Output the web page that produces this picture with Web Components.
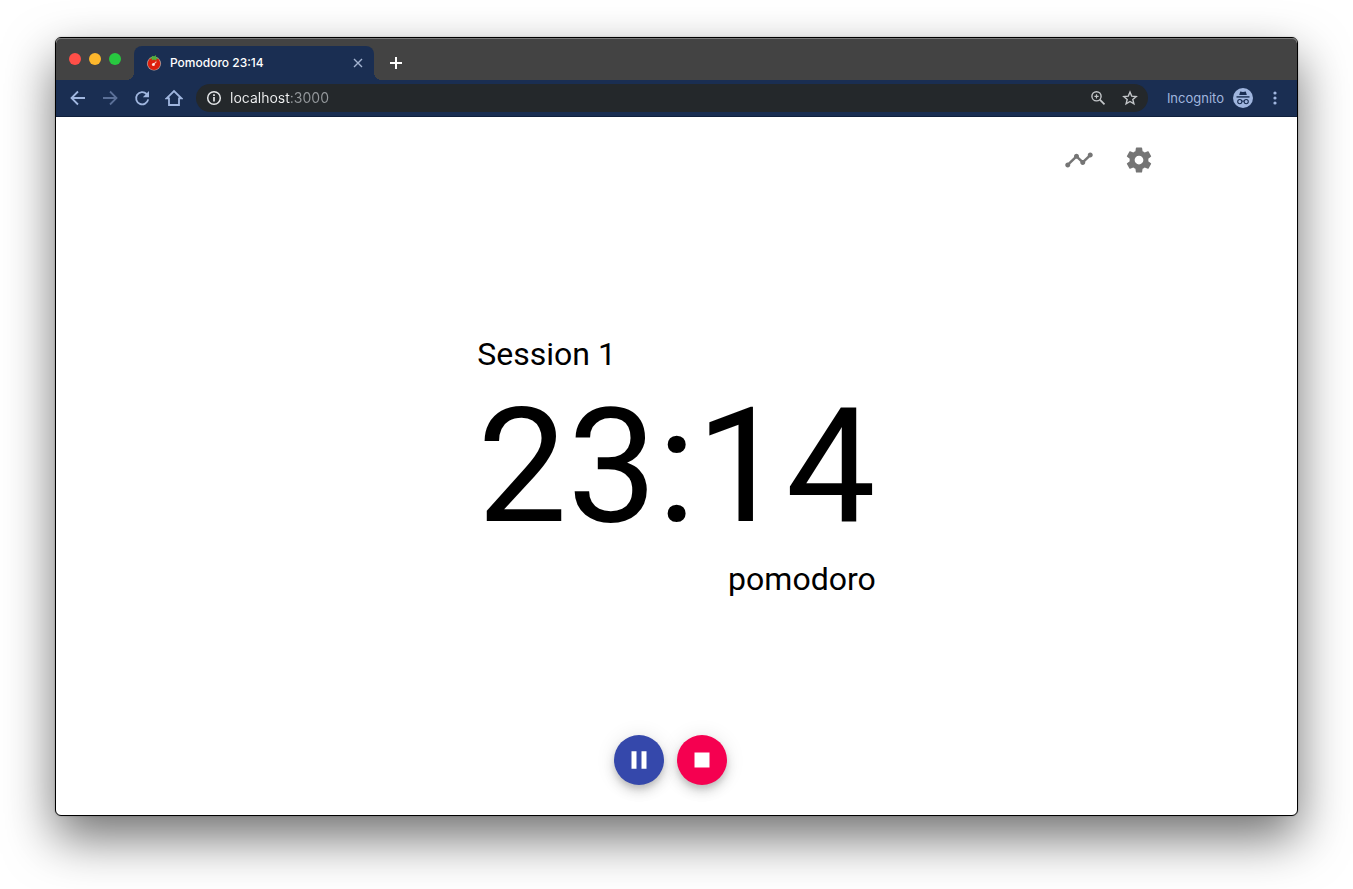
<!DOCTYPE html>
<html lang="en">
<head>
<meta charset="utf-8">
<title>Pomodoro 23:14</title>
<style>
  html { background: #fff; }
  body {
    margin: 0;
    box-sizing: border-box;
    min-height: 100vh;
    padding: 37px 55px 73px;
    display: flex;
    overflow: hidden;
  }
</style>
</head>
<body>
<browser-window>
  <tab-strip slot="tabs">Pomodoro 23:14</tab-strip>
  <nav-bar slot="toolbar" url="localhost:3000"></nav-bar>
  <pomodoro-app></pomodoro-app>
</browser-window>

<template id="browser-window">
  <style>
    :host {
      flex: 1; min-width: 0;
      display: flex; flex-direction: column;
      border: 1px solid #000;
      border-radius: 6px;
      background: #fff;
      overflow: hidden;
      box-shadow: 0 22px 50px rgba(0,0,0,.56), 0 0 2px rgba(0,0,0,.25);
      font-family: Inter, "Liberation Sans", sans-serif;
    }
    main { flex: 1; display: flex; }
  </style>
  <slot name="tabs"></slot>
  <slot name="toolbar"></slot>
  <main><slot></slot></main>
</template>

<template id="tab-strip">
  <style>
    :host {
      display: flex; align-items: flex-end;
      height: 42px; box-sizing: border-box;
      padding-left: 13px;
      border-radius: 5px 5px 0 0;
      background: #434343;
      box-shadow: inset 0 1px #7a7a7a;
      color: #fff;
    }
    button { border: 0; padding: 0; background: none; color: inherit; display: grid; place-items: center; }
    svg { display: block; }
    .lights { display: flex; gap: 8px; align-self: center; width: 65px; }
    .lights button { width: 12px; height: 12px; border-radius: 50%; }
    .close { background: #ff4f48; }
    .min { background: #fdb72c; }
    .max { background: #28c840; }
    .tab {
      position: relative;
      display: flex; align-items: center; gap: 8px;
      width: 240px; height: 34px; box-sizing: border-box;
      padding: 0 8px 0 12px;
      border-radius: 8px 8px 0 0;
      background: #1a2e52;
      font-size: 12px; font-weight: 500; line-height: 16px;
    }
    .tab::before, .tab::after {
      content: ""; position: absolute; bottom: 0; width: 8px; height: 8px;
    }
    .tab::before { right: 100%; background: radial-gradient(circle at 0 0, transparent 8px, #1a2e52 8px); }
    .tab::after { left: 100%; background: radial-gradient(circle at 100% 0, transparent 8px, #1a2e52 8px); }
    .title { flex: 1; }
    .x { width: 16px; height: 16px; color: #a3b3d0; }
    .new { width: 28px; height: 34px; margin-left: 8px; }
  </style>
  <div class="lights">
    <button class="close" aria-label="Close window"></button>
    <button class="min" aria-label="Minimise"></button>
    <button class="max" aria-label="Zoom window"></button>
  </div>
  <div class="tab">
    <svg width="16" height="16" viewBox="0 0 16 16">
      <circle cx="8" cy="8.6" r="7" fill="#b9a5a0"/>
      <circle cx="8" cy="8.6" r="6.3" fill="#dd1f0e"/>
      <path d="M8 4.6 5.8 5.6 6 3.7 3 3 6 2.2 5.8.8 8 1.6 10 0 9.9 2.2l3 .7-2.6 1 .2 1.8z" fill="#4fb03c"/>
      <path d="M7.4 9.4 10.4 6.6" fill="none" stroke="#f8c5ba" stroke-width="1.1"/>
      <circle cx="7.4" cy="9.6" r="1.5" fill="#fff" opacity=".85"/>
    </svg>
    <span class="title"><slot></slot></span>
    <button class="x" aria-label="Close tab">
      <svg width="10" height="10" viewBox="0 0 10 10"><path d="M1 1 9 9M9 1 1 9" stroke="currentColor" stroke-width="1.4"/></svg>
    </button>
  </div>
  <button class="new" aria-label="New tab">
    <svg width="12" height="12" viewBox="0 0 12 12"><path d="M6 0V12M0 6H12" stroke="currentColor" stroke-width="2"/></svg>
  </button>
</template>

<template id="nav-bar">
  <style>
    :host {
      display: flex; align-items: center;
      height: 37px; box-sizing: border-box;
      padding: 0 14px 0 8px;
      border-bottom: 1px solid #10203d;
      background: #1a2e52;
      color: #a0b6df;
    }
    button { border: 0; padding: 0; background: none; color: inherit; font: inherit; display: grid; place-items: center; }
    svg { display: block; }
    .nav { display: flex; gap: 4px; }
    .nav button { width: 28px; height: 28px; }
    .nav button:disabled { color: #5a6f97; }
    .omnibox {
      flex: 1; min-width: 0;
      display: flex; align-items: center;
      height: 28px; box-sizing: border-box;
      margin-left: 8px; padding: 0 8px 0 10px;
      border-radius: 14px;
      background: #24282b;
      color: #e4e6e8;
    }
    input {
      flex: 1; min-width: 0; height: 20px;
      margin: 0 8px; padding: 0; border: 0; outline: 0;
      font: 14px/20px Inter, "Liberation Sans", sans-serif;
      color: transparent; caret-color: #fff;
      background: linear-gradient(90deg, #f0f1f2 60px, #94989c 60px);
      -webkit-background-clip: text; background-clip: text;
    }
    .tools { display: flex; gap: 12px; color: #c3c6c9; }
    .tools button { width: 20px; height: 20px; }
    .profile { display: flex; align-items: center; gap: 9px; margin-left: 19px; font-size: 13px; line-height: 16px; }
    .menu { width: 16px; height: 28px; margin-left: 14px; }
  </style>
  <div class="nav">
    <button aria-label="Back"><svg width="16" height="16" viewBox="0 0 16 16"><path d="M15 8H2M8 1.5 1.5 8 8 14.5" fill="none" stroke="currentColor" stroke-width="1.8"/></svg></button>
    <button aria-label="Forward" disabled><svg width="16" height="16" viewBox="0 0 16 16"><path d="M1 8H14M8 1.5 14.5 8 8 14.5" fill="none" stroke="currentColor" stroke-width="1.8"/></svg></button>
    <button aria-label="Reload"><svg width="16" height="16" viewBox="0 0 16 16"><path d="M14.2 9.4A6.1 6.1 0 1 1 12.6 4" fill="none" stroke="currentColor" stroke-width="1.8"/><path d="M15 1v6.2H8.8z" fill="currentColor"/></svg></button>
    <button aria-label="Home"><svg width="18" height="18" viewBox="0 0 18 18"><path d="M1.6 9.3 9 2 16.4 9.3H14V16H4V9.3z" fill="none" stroke="currentColor" stroke-width="1.8"/></svg></button>
  </div>
  <div class="omnibox">
    <svg width="16" height="16" viewBox="0 0 16 16" fill="none" stroke="currentColor"><circle cx="8" cy="8" r="6.3" stroke-width="1.5"/><path d="M8 7v4.5M8 4.3v1.7" stroke-width="1.7"/></svg>
    <input type="text" aria-label="Address" spellcheck="false">
    <div class="tools">
      <button aria-label="Page zoom"><svg width="16" height="16" viewBox="0 0 16 16" fill="none" stroke="currentColor"><circle cx="6.5" cy="6.3" r="4.6" stroke-width="1.4"/><path d="M9.8 9.6 14.5 14.3" stroke-width="1.8"/><path d="M6.5 4.2v4.2M4.4 6.3h4.2" stroke-width="1.2"/></svg></button>
      <button aria-label="Bookmark this page"><svg width="16" height="16" viewBox="0 0 16 16"><path d="M8 2 9.7 6.1 14.2 6.5 10.8 9.4 11.9 13.8 8 11.5 4.1 13.8 5.2 9.4 1.8 6.5 6.3 6.1z" fill="none" stroke="currentColor" stroke-width="1.4"/></svg></button>
    </div>
  </div>
  <button class="profile">
    <span>Incognito</span>
    <svg width="20" height="20" viewBox="0 0 20 20"><circle cx="10" cy="10" r="10" fill="#a0b6df"/><g fill="#1a2e52"><path d="M7.2 3.6 10 4.1l2.8-.5L13.8 7H6.2z"/><rect x="3.5" y="8.2" width="13" height="1.4"/></g><g fill="none" stroke="#1a2e52" stroke-width="1.1"><circle cx="6.8" cy="13.6" r="2.1"/><circle cx="13.2" cy="13.6" r="2.1"/><path d="M8.8 13.4q1.2-.8 2.4 0"/></g></svg>
  </button>
  <button class="menu" aria-label="Menu"><svg width="4" height="14" viewBox="0 0 4 14" fill="currentColor"><circle cx="2" cy="2" r="1.6"/><circle cx="2" cy="7" r="1.6"/><circle cx="2" cy="12" r="1.6"/></svg></button>
</template>

<template id="pomodoro-app">
  <style>
    :host {
      flex: 1; min-width: 0;
      display: grid; grid-template-rows: 80px 1fr 80px;
      color: #000;
      font-family: Roboto, "Liberation Sans", sans-serif;
    }
    header {
      display: flex; justify-content: flex-end;
      width: 100%; max-width: 985px; box-sizing: border-box;
      margin: 0 auto; padding-top: 13px;
    }
    header button {
      width: 60px; height: 60px; padding: 0; border: 0;
      background: none; color: #757575;
      display: grid; place-items: center;
    }
    timer-display { place-self: center; padding-top: 1px; }
    footer { display: flex; justify-content: center; gap: 13px; padding-right: 12px; }
    svg { display: block; }
  </style>
  <header>
    <button aria-label="Statistics"><svg width="30" height="30" viewBox="0 0 24 24" fill="currentColor"><path d="M23 8c0 1.1-.9 2-2 2-.18 0-.35-.02-.51-.07l-3.56 3.55c.05.16.07.34.07.52 0 1.1-.9 2-2 2s-2-.9-2-2c0-.18.02-.36.07-.52l-2.55-2.55c-.16.05-.34.07-.52.07s-.36-.02-.52-.07l-4.55 4.56c.05.16.07.33.07.51 0 1.1-.9 2-2 2s-2-.9-2-2 .9-2 2-2c.18 0 .35.02.51.07l4.56-4.55C8.02 9.36 8 9.18 8 9c0-1.1.9-2 2-2s2 .9 2 2c0 .18-.02.36-.07.52l2.55 2.55c.16-.05.34-.07.52-.07s.36.02.52.07l3.55-3.56C19.02 8.35 19 8.18 19 8c0-1.1.9-2 2-2s2 .9 2 2z"/></svg></button>
    <button aria-label="Settings"><svg width="30" height="30" viewBox="0 0 24 24" fill="currentColor"><path d="M19.43 12.98c.04-.32.07-.64.07-.98s-.03-.66-.07-.98l2.11-1.65c.19-.15.24-.42.12-.64l-2-3.46c-.12-.22-.39-.3-.61-.22l-2.49 1c-.52-.4-1.08-.73-1.69-.98l-.38-2.65C14.46 2.18 14.25 2 14 2h-4c-.25 0-.46.18-.49.42l-.38 2.65c-.61.25-1.17.59-1.69.98l-2.49-1c-.23-.09-.49 0-.61.22l-2 3.46c-.13.22-.07.49.12.64l2.11 1.65c-.04.32-.07.65-.07.98s.03.66.07.98l-2.11 1.65c-.19.15-.24.42-.12.64l2 3.46c.12.22.39.3.61.22l2.49-1c.52.4 1.08.73 1.69.98l.38 2.65c.03.24.24.42.49.42h4c.25 0 .46-.18.49-.42l.38-2.65c.61-.25 1.17-.59 1.69-.98l2.49 1c.23.09.49 0 .61-.22l2-3.46c.12-.22.07-.49-.12-.64l-2.11-1.65zM12 15.5c-1.93 0-3.5-1.57-3.5-3.5s1.57-3.5 3.5-3.5 3.5 1.57 3.5 3.5-1.57 3.5-3.5 3.5z"/></svg></button>
  </header>
  <timer-display>
    <span slot="session">Session 1</span>
    <span slot="time">23:14</span>
    <span slot="mode">pomodoro</span>
  </timer-display>
  <footer>
    <fab-button label="Pause" style="--fab: #3548ab"><svg width="30" height="30" viewBox="0 0 24 24" fill="currentColor"><path d="M6 19h4V5H6v14zm8-14v14h4V5h-4z"/></svg></fab-button>
    <fab-button label="Stop" style="--fab: #f50050"><svg width="30" height="30" viewBox="0 0 24 24" fill="currentColor"><path d="M6 6h12v12H6z"/></svg></fab-button>
  </footer>
</template>

<template id="timer-display">
  <style>
    :host { display: flex; flex-direction: column; }
    div { font-size: 32px; line-height: 38px; }
    .time { font-size: 160px; line-height: 187px; }
    .mode { text-align: right; }
  </style>
  <div><slot name="session"></slot></div>
  <div class="time" role="timer"><slot name="time"></slot></div>
  <div class="mode"><slot name="mode"></slot></div>
</template>

<template id="fab-button">
  <style>
    :host { display: block; }
    button {
      display: grid; place-items: center;
      width: 50px; height: 50px; padding: 0;
      border: 0; border-radius: 50%;
      background: var(--fab); color: #fff;
      box-shadow: 0 4px 6px -1px rgba(0,0,0,.14), 0 7px 12px rgba(0,0,0,.12), 0 1px 20px rgba(0,0,0,.1);
    }
  </style>
  <button><slot></slot></button>
</template>

<script>
  class Base extends HTMLElement {
    constructor() {
      super();
      this.attachShadow({ mode: "open" })
        .append(document.getElementById(this.localName).content.cloneNode(true));
    }
  }
  customElements.define("timer-display", class extends Base {});
  customElements.define("fab-button", class extends Base {
    connectedCallback() {
      this.shadowRoot.querySelector("button").setAttribute("aria-label", this.getAttribute("label"));
    }
  });
  customElements.define("pomodoro-app", class extends Base {});
  customElements.define("nav-bar", class extends Base {
    connectedCallback() {
      this.shadowRoot.querySelector("input").value = this.getAttribute("url");
    }
  });
  customElements.define("tab-strip", class extends Base {});
  customElements.define("browser-window", class extends Base {});
</script>
</body>
</html>
